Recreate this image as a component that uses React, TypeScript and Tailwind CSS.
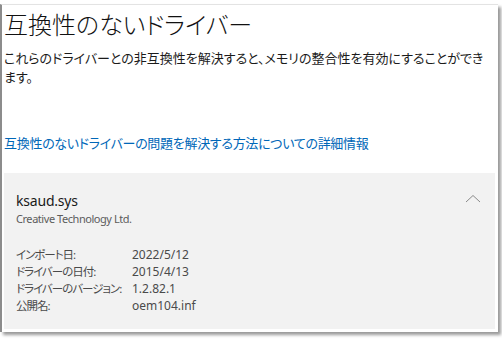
export default function App() {
  const rows = [
    ["インポート日:", "2022/5/12"],
    ["ドライバーの日付:", "2015/4/13"],
    ["ドライバーのバージョン:", "1.2.82.1"],
    ["公開名:", "oem104.inf"],
  ]

  return (
    <div
      className="w-[502px] h-[342px] bg-white overflow-hidden pt-1"
      style={{ fontFamily: '"Noto Sans", "Noto Sans CJK JP", sans-serif' }}
    >
      {/* Window */}
      <div className="w-[498px] h-[328px] bg-white border-l-2 border-l-[#8c8c8c] border-t border-t-[#e3e3e3] shadow-[3px_3px_3px_rgba(0,0,0,0.4)] pl-[2px] pr-[3px] pb-[3px] flex flex-col [font-feature-settings:'palt']">
        <h1 className="pt-[4px] text-[24px] leading-[32px] font-light text-[#111]">
          互換性のないドライバー
        </h1>

        <p className="mt-[8px] text-[13px] leading-[19px] text-[#1b1b1b]">
          これらのドライバーとの非互換性を解決すると、メモリの整合性を有効にすることができます。
        </p>

        <a className="mt-[47px] text-[13px] leading-[19px] tracking-[-0.3px] text-[#0067b8]">
          互換性のないドライバーの問題を解決する方法についての詳細情報
        </a>

        {/* Driver card */}
        <div className="mt-[20px] flex-1 bg-[#f2f2f2] pl-[12px] pr-[14px] pt-[18px]">
          <div className="flex justify-between items-start">
            <div>
              <div className="text-[14px] leading-[20px] tracking-[-0.2px] text-[#1a1a1a]">ksaud.sys</div>
              <div className="text-[11px] leading-[16px] tracking-[-0.45px] text-[#5c5c5c]">
                Creative Technology Ltd.
              </div>
            </div>
            <svg width="16" height="9" viewBox="0 0 16 9" className="mt-[3px]">
              <path d="M1 8 L8 1.5 L15 8" fill="none" stroke="#8a8a8a" strokeWidth="1" />
            </svg>
          </div>

          <div className="mt-[19px] text-[12px] leading-[17px] text-[#4a4a4a]">
            {rows.map(([label, value]) => (
              <div key={label} className="flex">
                <span className="w-[116px] shrink-0 whitespace-nowrap text-[11.5px] tracking-[-1px]">{label}</span>
                <span>{value}</span>
              </div>
            ))}
          </div>
        </div>
      </div>
    </div>
  )
}
